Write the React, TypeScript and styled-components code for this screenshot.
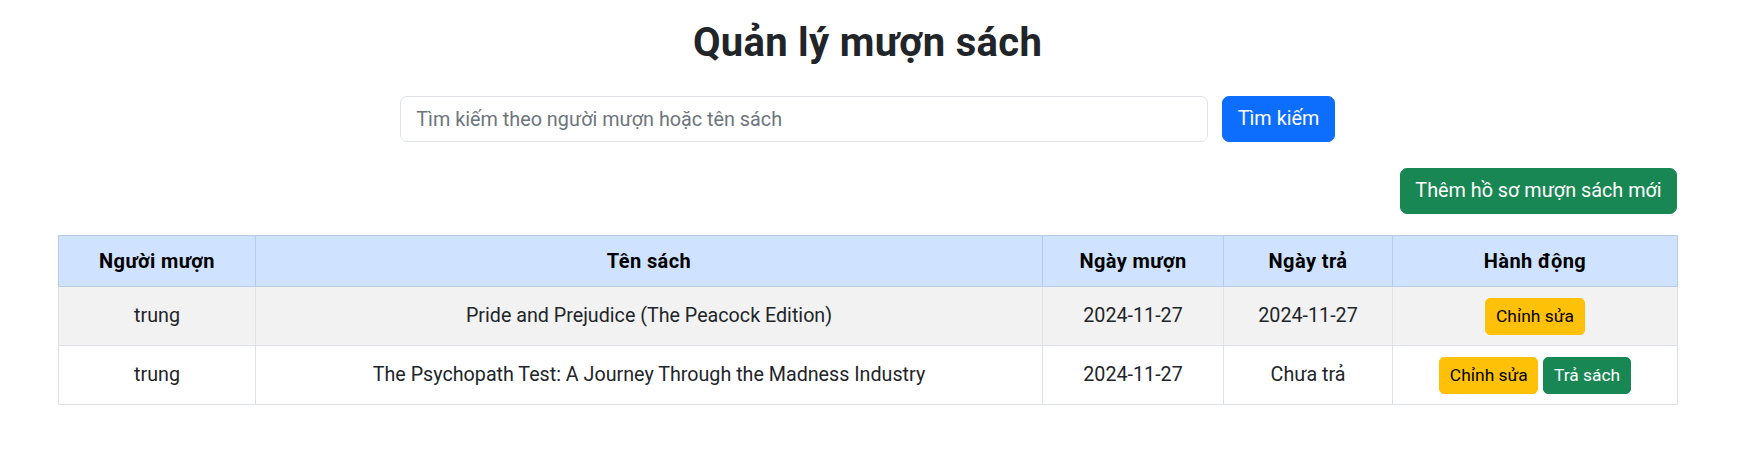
import React from "react";
import styled, { createGlobalStyle } from "styled-components";

const GlobalStyle = createGlobalStyle`
  * { box-sizing: border-box; }
  body {
    margin: 0;
    background: #ffffff;
    color: #212529;
    font-family: Roboto, "Noto Sans", "Liberation Sans", sans-serif;
    font-size: 19.7px;
    line-height: 1.5;
  }
`;

const Page = styled.div`
  padding: 20px 66px 40px 58px;
`;

const Title = styled.h2`
  margin: 0;
  text-align: center;
  font-size: 40px;
  line-height: 46px;
  font-weight: 700;
  letter-spacing: 0.3px;
  color: #212529;
`;

const SearchForm = styled.form`
  display: flex;
  justify-content: center;
  align-items: center;
  gap: 14px;
  margin-top: 30px;
`;

const SearchInput = styled.input`
  width: 808px;
  height: 46px;
  padding: 0 15px;
  border: 1px solid #dee2e6;
  border-radius: 7px;
  font-family: inherit;
  font-size: 19.8px;
  color: #212529;
  outline: none;
  &::placeholder {
    color: #6c757d;
  }
`;

type Variant = "primary" | "success" | "warning";

const colors: Record<Variant, { bg: string; fg: string }> = {
  primary: { bg: "#0d6efd", fg: "#ffffff" },
  success: { bg: "#198754", fg: "#ffffff" },
  warning: { bg: "#ffc107", fg: "#000000" },
};

const Button = styled.button<{ $variant: Variant; $small?: boolean }>`
  display: inline-flex;
  align-items: center;
  justify-content: center;
  border: 1px solid ${(p) => colors[p.$variant].bg};
  background: ${(p) => colors[p.$variant].bg};
  color: ${(p) => colors[p.$variant].fg};
  font-family: inherit;
  font-weight: 400;
  font-size: ${(p) => (p.$small ? "17.4px" : "19.8px")};
  line-height: 1.5;
  height: ${(p) => (p.$small ? "37px" : "46px")};
  padding: ${(p) => (p.$small ? "0 9.6px" : "0 14.4px")};
  border-radius: ${(p) => (p.$small ? "5px" : "7px")};
  cursor: pointer;
  white-space: nowrap;
`;

const Toolbar = styled.div`
  display: flex;
  justify-content: flex-end;
  margin-top: 26px;
`;

const Table = styled.table`
  width: 100%;
  margin-top: 21px;
  border-collapse: collapse;
  table-layout: fixed;
  color: #212529;
`;

const HeadCell = styled.th<{ $w: number }>`
  width: ${(p) => p.$w}px;
  height: 51px;
  padding: 0 9.6px;
  background: #cfe2ff;
  border: 1px solid #bacbe6;
  font-size: 20px;
  font-weight: 700;
  letter-spacing: 0.4px;
  text-align: center;
  vertical-align: middle;
  color: #000000;
`;

const Row = styled.tr<{ $striped?: boolean }>`
  background: ${(p) => (p.$striped ? "#f2f2f2" : "#ffffff")};
`;

const Cell = styled.td`
  height: 59px;
  padding: 0 9.6px;
  border: 1px solid #dee2e6;
  text-align: center;
  vertical-align: middle;
`;

const Actions = styled.div`
  display: flex;
  justify-content: center;
  gap: 5px;
`;

const columns = [
  { label: "Người mượn", w: 197 },
  { label: "Tên sách", w: 787 },
  { label: "Ngày mượn", w: 181 },
  { label: "Ngày trả", w: 169 },
  { label: "Hành động", w: 285 },
];

const records = [
  {
    borrower: "trung",
    book: "Pride and Prejudice (The Peacock Edition)",
    borrowed: "2024-11-27",
    returned: "2024-11-27",
  },
  {
    borrower: "trung",
    book: "The Psychopath Test: A Journey Through the Madness Industry",
    borrowed: "2024-11-27",
    returned: null as string | null,
  },
];

export default function App() {
  return (
    <>
      <GlobalStyle />
      <Page>
        <Title>Quản lý mượn sách</Title>
        <SearchForm onSubmit={(e) => e.preventDefault()}>
          <SearchInput placeholder="Tìm kiếm theo người mượn hoặc tên sách" />
          <Button $variant="primary" type="submit">
            Tìm kiếm
          </Button>
        </SearchForm>
        <Toolbar>
          <Button $variant="success">Thêm hồ sơ mượn sách mới</Button>
        </Toolbar>
        <Table>
          <thead>
            <tr>
              {columns.map((c) => (
                <HeadCell key={c.label} $w={c.w}>
                  {c.label}
                </HeadCell>
              ))}
            </tr>
          </thead>
          <tbody>
            {records.map((r, i) => (
              <Row key={i} $striped={i % 2 === 0}>
                <Cell>{r.borrower}</Cell>
                <Cell>{r.book}</Cell>
                <Cell>{r.borrowed}</Cell>
                <Cell>{r.returned ?? "Chưa trả"}</Cell>
                <Cell>
                  <Actions>
                    <Button $variant="warning" $small>
                      Chỉnh sửa
                    </Button>
                    {!r.returned && (
                      <Button $variant="success" $small>
                        Trả sách
                      </Button>
                    )}
                  </Actions>
                </Cell>
              </Row>
            ))}
          </tbody>
        </Table>
      </Page>
    </>
  );
}
